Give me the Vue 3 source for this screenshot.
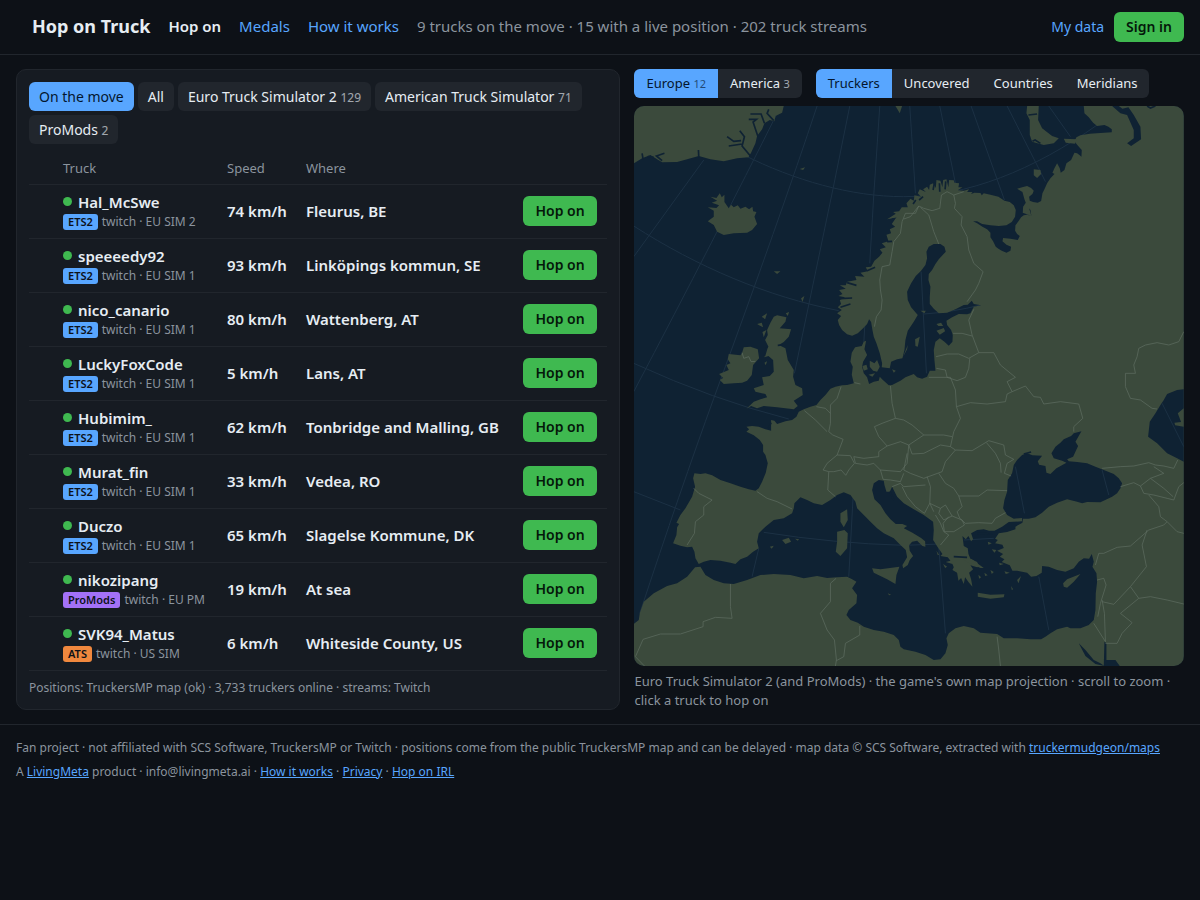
<script setup>
import { ref } from 'vue'

const filter = ref('move')
const region = ref('eu')
const layer = ref('Truckers')

const filters = [
  { id: 'move', label: 'On the move' },
  { id: 'all', label: 'All' },
  { id: 'ets2', label: 'Euro Truck Simulator 2', count: 129 },
  { id: 'ats', label: 'American Truck Simulator', count: 71 },
  { id: 'pm', label: 'ProMods', count: 2 }
]
const regions = [
  { id: 'eu', label: 'Europe', count: 12 },
  { id: 'us', label: 'America', count: 3 }
]
const layers = ['Truckers', 'Uncovered', 'Countries', 'Meridians']

const trucks = [
  { name: 'Hal_McSwe', game: 'ETS2', server: 'EU SIM 2', speed: 74, where: 'Fleurus, BE' },
  { name: 'speeeedy92', game: 'ETS2', server: 'EU SIM 1', speed: 93, where: 'Linköpings kommun, SE' },
  { name: 'nico_canario', game: 'ETS2', server: 'EU SIM 1', speed: 80, where: 'Wattenberg, AT' },
  { name: 'LuckyFoxCode', game: 'ETS2', server: 'EU SIM 1', speed: 5, where: 'Lans, AT' },
  { name: 'Hubimim_', game: 'ETS2', server: 'EU SIM 1', speed: 62, where: 'Tonbridge and Malling, GB' },
  { name: 'Murat_fin', game: 'ETS2', server: 'EU SIM 1', speed: 33, where: 'Vedea, RO' },
  { name: 'Duczo', game: 'ETS2', server: 'EU SIM 1', speed: 65, where: 'Slagelse Kommune, DK' },
  { name: 'nikozipang', game: 'ProMods', server: 'EU PM', speed: 19, where: 'At sea' },
  { name: 'SVK94_Matus', game: 'ATS', server: 'US SIM', speed: 6, where: 'Whiteside County, US' }
]
</script>

<template>
  <div class="page">
    <header class="top">
      <h1 class="brand">Hop on Truck</h1>
      <nav class="nav">
        <a href="#" class="current">Hop on</a>
        <a href="#medals">Medals</a>
        <a href="#how">How it works</a>
      </nav>
      <span class="stats">9 trucks on the move · 15 with a live position · 202 truck streams</span>
      <div class="account">
        <a href="#data">My data</a>
        <button type="button" class="go">Sign in</button>
      </div>
    </header>

    <main class="main">
      <section class="panel">
        <div class="chips">
          <button
            v-for="f in filters" :key="f.id" type="button" class="chip"
            :class="{ on: filter === f.id }" @click="filter = f.id"
          >{{ f.label + ' ' }}<small v-if="f.count">{{ f.count }}</small></button>
        </div>
        <table class="trucks">
          <colgroup>
            <col class="c-pin"><col class="c-truck"><col class="c-speed"><col><col class="c-act">
          </colgroup>
          <thead>
            <tr><th></th><th>Truck</th><th>Speed</th><th>Where</th><th></th></tr>
          </thead>
          <tbody>
            <tr v-for="t in trucks" :key="t.name">
              <td></td>
              <td>
                <div class="name"><span class="dot"></span>{{ t.name }}</div>
                <div class="sub"><span class="tag" :class="t.game.toLowerCase()">{{ t.game }}</span>twitch · {{ t.server }}</div>
              </td>
              <td class="strong">{{ t.speed }} km/h</td>
              <td class="strong">{{ t.where }}</td>
              <td class="act"><button type="button" class="go">Hop on</button></td>
            </tr>
          </tbody>
        </table>
        <p class="source">Positions: TruckersMP map (ok) · 3,733 truckers online · streams: Twitch</p>
      </section>

      <section class="side">
        <div class="switches">
          <div class="seg">
            <button
              v-for="r in regions" :key="r.id" type="button"
              :class="{ on: region === r.id }" @click="region = r.id"
            >{{ r.label }} <small>{{ r.count }}</small></button>
          </div>
          <div class="seg">
            <button
              v-for="l in layers" :key="l" type="button"
              :class="{ on: layer === l }" @click="layer = l"
            >{{ l }}</button>
          </div>
        </div>

        <svg class="map" viewBox="0 18 1650 1680" preserveAspectRatio="xMidYMid slice" role="img" aria-label="Map of Europe">
          <g class="grid">
            <path d="M330 165C480 240 650 290 810 290C1000 290 1200 210 1390 75M0 378C190 500 400 590 615 632M870 642Q960 636 1040 615M0 790Q240 900 465 957M0 1175L140 1230M390 1297Q600 1330 810 1336L920 1332M990 1320L1080 1315" />
            <path d="M210 180L0 470M430 40Q250 400 0 875M550 18Q440 350 240 895Q140 1170 18 1540M648 18L597 270L482 820M375 1345L355 1430M738 18L720 285L708 490M694 660L690 730M658 1190L645 1430M828 18L845 280M862 515L878 820M915 1340L935 1600M918 18L965 250M1215 1430L1245 1590M1145 1100L1172 1240M1012 18L1112 300M1120 18L1235 245M1245 18L1310 110M1405 1110L1425 1185" />
          </g>

          <g class="land">
            <path d="M1350 18L1352 40 1365 52 1378 68 1390 78 1412 75 1424 80 1434 88 1434 97 1400 99 1368 101 1340 106 1328 112 1322 124 1330 134 1344 150 1343 170 1338 166 1330 160 1322 158 1312 180 1298 190 1292 210 1281 218 1278 205 1270 190 1262 205 1256 218 1262 222 1250 235 1240 250 1232 268 1226 280 1224 292 1222 303 1212 308 1198 306 1188 302 1186 290 1196 282 1200 272 1192 264 1180 258 1165 262 1150 266 1166 276 1172 298 1176 308 1168 320 1167 338 1193 348 1186 325 1176 312 1190 330 1193 348 1180 344 1170 346 1162 352 1154 364 1145 376 1144 392 1150 402 1158 408 1152 420 1130 416 1108 414 1106 424 1118 434 1132 440 1130 452 1118 458 1104 452 1094 446 1086 440 1078 424 1070 412 1070 398 1060 388 1046 380 1030 370 1018 364 1030 364 1045 372 1070 376 1095 378 1118 376 1134 366 1144 350 1146 330 1140 316 1128 306 1112 302 1094 290 1070 284 1050 280 1044 286 1040 279 1022 278 1012 282 1016 276 1000 276 1006 268 990 272 972 271 986 262 974 262 976 250 962 248 960 241 946 240 944 262 938 238 928 240 926 262 920 242 908 240 906 264 898 250 888 254 886 270 880 260 868 268 876 276 858 268 852 280 862 290 842 286 840 302 830 296 818 310 822 322 804 322 796 334 778 336 790 344 764 356 788 352 774 372 784 380 768 388 772 400 758 404 764 424 744 430 756 442 738 448 746 458 736 470 722 482 712 500 696 502 702 514 680 518 692 530 664 528 668 540 640 545 636 556 618 556 636 566 616 570 626 582 614 588 634 592 618 600 622 612 612 622 624 630 610 640 622 648 612 660 616 675 625 690 640 703 655 707 672 700 688 685 700 672 706 658 712 666 716 690 720 710 728 730 738 760 745 790 744 802 768 805 772 785 790 778 806 775 812 750 815 720 822 692 840 665 852 645 832 622 822 600 820 575 832 550 846 528 862 512 875 495 880 475 878 455 885 440 900 432 920 432 932 440 936 455 926 466 915 478 905 492 895 510 885 522 884 540 890 560 888 590 888 612 900 626 915 640 940 638 965 628 990 615 1002 614 1014 602 1020 612 1042 616 1020 620 1010 640 1000 643 975 642 955 652 938 662 940 675 952 690 957 705 956 725 945 737 932 725 918 715 905 725 900 750 902 780 905 812 888 812 880 830 865 836 850 832 840 822 815 832 800 842 775 855 765 856 745 838 738 830 735 842 720 845 706 852 700 832 690 820 685 800 688 785 700 765 692 748 697 722 690 725 684 738 664 742 654 758 650 785 657 800 654 824 660 850 640 855 625 856 605 860 590 866 575 885 560 900 548 915 530 920 510 928 495 935 488 950 475 960 455 964 430 972 422 962 412 960 412 992 395 988 375 980 355 978 338 980 346 988 338 995 360 1006 378 1020 388 1035 388 1055 395 1065 402 1090 396 1118 385 1145 375 1165 365 1172 345 1168 320 1160 290 1150 260 1140 235 1126 215 1120 200 1122 182 1120 178 1135 184 1160 175 1190 155 1225 140 1245 128 1268 136 1272 130 1282 128 1305 118 1330 140 1337 160 1342 175 1340 182 1355 185 1375 195 1392 210 1385 230 1380 260 1382 290 1388 305 1392 320 1378 340 1370 358 1355 375 1345 370 1325 375 1300 395 1280 420 1260 450 1255 475 1240 480 1225 482 1210 500 1192 520 1200 540 1210 565 1215 590 1200 610 1185 630 1177 650 1185 665 1205 670 1225 690 1245 710 1265 730 1285 750 1300 780 1315 800 1335 816 1350 820 1372 806 1395 808 1405 822 1395 828 1380 838 1368 828 1352 826 1336 835 1325 850 1322 866 1338 875 1340 874 1324 862 1314 836 1298 810 1285 820 1278 806 1272 786 1272 770 1258 755 1240 740 1215 722 1198 715 1170 720 1150 735 1140 750 1142 752 1155 758 1175 768 1175 775 1160 790 1190 810 1210 840 1228 870 1245 898 1265 900 1290 898 1320 912 1342 926 1362 920 1368 942 1372 950 1382 936 1386 956 1392 960 1402 956 1410 970 1418 974 1442 982 1434 990 1452 994 1432 1004 1446 1016 1460 1012 1438 1006 1418 1018 1408 1010 1396 1030 1402 1036 1400 1030 1386 1010 1376 1004 1362 1002 1345 990 1338 986 1308 996 1318 1004 1308 1012 1324 1018 1318 1012 1300 1030 1290 1050 1288 1066 1292 1082 1292 1105 1280 1125 1266 1165 1264 1165 1254 1140 1256 1120 1245 1108 1225 1112 1200 1120 1175 1122 1140 1135 1120 1140 1095 1150 1080 1165 1065 1180 1060 1196 1066 1225 1067 1212 1084 1216 1094 1235 1098 1238 1118 1250 1122 1268 1105 1298 1088 1285 1082 1260 1075 1253 1060 1265 1040 1280 1028 1290 1018 1312 1008 1320 1000 1343 994 1325 1025 1333 1038 1318 1070 1300 1078 1305 1084 1330 1086 1360 1090 1385 1100 1410 1110 1440 1122 1455 1135 1465 1150 1460 1165 1450 1180 1435 1190 1400 1207 1360 1206 1345 1210 1330 1205 1300 1198 1270 1208 1245 1220 1225 1238 1205 1252 1185 1256 1168 1256 1166 1268 1145 1280 1145 1288 1120 1296 1095 1300 1084 1316 1092 1320 1084 1330 1106 1334 1110 1344 1090 1352 1108 1362 1098 1370 1112 1378 1104 1386 1128 1396 1136 1412 1150 1412 1180 1418 1192 1430 1208 1428 1224 1418 1225 1398 1245 1400 1270 1410 1295 1415 1320 1405 1335 1385 1350 1375 1366 1376 1374 1362 1380 1385 1376 1400 1388 1420 1390 1445 1386 1480 1385 1530 1380 1560 1365 1575 1340 1585 1310 1585 1300 1580 1270 1588 1250 1600 1235 1610 1222 1618 1190 1618 1150 1615 1110 1615 1090 1602 1040 1598 1020 1585 990 1578 965 1585 945 1600 938 1615 942 1635 935 1660 920 1678 900 1680 875 1665 845 1655 810 1648 800 1640 795 1620 780 1605 750 1595 720 1590 690 1580 672 1568 650 1560 638 1545 645 1530 668 1510 670 1485 655 1465 668 1445 655 1438 640 1430 610 1432 580 1434 550 1428 510 1435 470 1425 420 1422 380 1425 340 1440 300 1452 270 1450 240 1440 215 1425 200 1400 184 1402 160 1430 130 1450 100 1458 60 1480 30 1505 18 1540 15 1560 0 1572V1698H1650V18Z" />
            <path d="M0 18H450L445 38 425 48 422 64 408 60 392 70 385 88 370 108 365 130 352 158 344 172 310 175 270 184 230 178 195 168 160 178 130 186 85 187 70 178 50 165 25 175 0 190Z" />
            <path d="M230 290L248 294 258 280 264 292 272 284 272 306 285 325 292 314 300 322 312 316 320 326 335 320 346 328 356 320 358 334 368 336 362 350 370 372 355 390 340 398 300 400 270 405 250 395 240 375 222 364 240 350 240 332 222 322 248 324 256 316 234 308 250 302Z" />
            <path d="M420 650L430 646 458 652 455 665 438 685 472 688 465 710 450 726 435 735 455 745 462 780 480 810 478 830 485 855 505 865 507 885 480 902 492 918 480 928 430 922 390 918 370 925 352 918 338 926 360 905 380 898 400 892 395 882 365 875 360 865 390 855 385 832 408 828 420 815 418 780 404 768 392 772 396 750 404 740 394 720 402 705 400 690 410 668Z" />
            <path d="M330 742L350 740 372 748 376 775 358 795 354 825 340 842 325 848 300 850 270 852 258 840 268 834 256 822 285 810 278 795 290 790 282 778 285 762 320 766 325 758Z" />
            <path d="M384 650L400 640 394 658ZM370 672L384 668 388 682 376 676ZM386 696L398 690 390 712ZM456 640L466 636 462 648ZM502 595L512 588 506 606ZM392 788L400 784 396 796ZM498 207L514 202 508 210ZM420 514L440 514 430 522ZM785 18H805L798 40ZM760 358L798 334 788 352ZM1180 18H1215L1213 60 1225 85 1255 108 1275 115 1260 130 1230 135 1195 125 1188 105 1188 60 1178 40ZM1290 116L1328 118 1324 131 1296 128ZM1200 208L1220 210 1222 222 1210 234 1200 226Z" />
            <path d="M686 798L698 794 702 808 690 812ZM708 782L722 790 730 780 738 800 730 815 718 812 708 800ZM704 824L724 820 716 830ZM775 808L786 812 780 818ZM808 770L822 735 820 748ZM844 718L858 710 852 740 845 738ZM908 672L922 668 928 678 914 678ZM908 692L930 684 934 694 918 704ZM860 632L876 632 872 640Z" />
            <path d="M715 1405L740 1408 797 1400 788 1425 785 1452 760 1438 720 1418ZM610 1295L632 1290 642 1300 640 1345 620 1368 606 1355 610 1325ZM620 1240L640 1228 642 1260 630 1282 620 1265ZM445 1320L465 1313 472 1325 455 1332ZM408 1340L420 1337 414 1346ZM484 1316L496 1318 492 1322ZM762 1480L772 1484 766 1486ZM1032 1478L1070 1484 1112 1483 1110 1492 1070 1496 1032 1490ZM1288 1450L1300 1438 1340 1422 1320 1445 1300 1463 1290 1460ZM1150 1440L1162 1428 1154 1450ZM984 1375L1014 1378 1050 1404 1040 1404 1000 1386ZM1074 1348L1088 1350 1082 1358ZM1062 1325L1074 1330 1064 1334ZM1096 1388L1110 1392 1098 1396ZM1052 1418L1062 1426 1054 1428ZM1070 1410L1080 1416 1074 1422ZM1034 1424L1042 1432 1036 1436ZM1112 1414L1128 1418 1116 1422ZM1132 1458L1138 1468 1134 1470ZM908 1352L916 1364 912 1366ZM928 1392L940 1400 934 1404Z" />
          </g>

          <g class="sea">
            <path d="M1650 868L1630 870 1600 882 1590 900 1580 915 1565 940 1548 965 1543 1010 1570 1030 1600 1060 1630 1075 1650 1085V980L1624 976 1622 968 1642 966 1632 940 1650 925Z" />
            <path d="M1335 1630L1355 1650 1380 1680 1400 1690 1412 1698 1385 1692 1355 1668ZM1412 1625L1418 1630 1418 1680 1445 1680 1458 1698H1410ZM1435 18L1460 40 1480 45 1500 90 1500 115 1480 130 1492 138 1522 118 1520 80 1500 45 1484 22 1466 26 1455 18Z" />
          </g>
          <g class="inlet">
            <path d="M350 168L325 138 332 110 318 92M325 132L285 138M322 122L300 124 280 110M372 108L358 66 368 58 345 58M392 70L382 42 350 42M420 62L400 40 405 28M195 172L194 150M85 182L68 168 92 160M28 178L25 160M60 172L42 170" />
            <path d="M618 596L655 594M620 622L650 612M700 512L724 502M640 548L668 556M760 425L775 424M898 270L902 248M918 275L917 250M934 268L936 244M846 300L838 312M868 290L856 300" />
            <path d="M1000 1372L960 1370M1076 1302L1030 1300M1540 18L1550 24 1565 18M1184 45L1210 42M1196 124L1204 120 1220 130M445 735L432 736M412 968L404 985M768 1175L780 1200M1170 1062L1192 1056M400 740L392 768" />
          </g>
          <g class="grid">
            <path d="M1585 910L1650 1040" />
          </g>

          <g class="borders">
            <path d="M810 357L830 350 855 318 870 325 895 332 918 325 923 285 940 275 960 285 965 310 962 325 985 350 982 375 1000 410 1005 450 1020 490 1048 515 1035 550 1025 570 1000 605M855 318L845 340 815 340 805 365 800 400 780 425 775 455 768 495 745 500 738 540 740 570 745 600 742 630 728 650 722 680M860 322L885 345 900 395 915 432M960 285L990 275" />
            <path d="M1020 628L1005 660 1015 705 1035 758 1080 758 1100 795 1145 832 1120 845 1135 875 1175 858 1200 890 1220 892 1230 912 1280 905 1335 912 1347 955 1320 980 1320 995M958 700L985 700 1015 708M907 770L940 762 975 762 1005 775 1035 758M1008 775L1005 805 995 832 970 842 940 832 935 810 908 805M885 832L950 832 965 870 968 920 980 955 960 995 950 1040 965 1050 1015 1052 1065 1022 1110 1035 1115 1065 1140 1078 1120 1090 1112 1120 1132 1128M968 920L1010 908 1060 912 1115 905 1120 882 1135 875M1058 1028L1085 1060 1100 1090 1102 1118" />
            <path d="M950 1040L920 1035 870 1060 835 1062 825 1035 870 1005 930 1005 955 1010M965 1050L935 1085 925 1115 870 1135 830 1120 810 1110 820 1060M770 858L775 910 785 955 810 960 835 975 870 1005M785 955L745 970 722 980 735 1010 760 1038 800 1025 825 1035M760 1038L735 1055 735 1070 690 1075 660 1070 665 1090 700 1095 720 1090 740 1110 800 1115 820 1090 825 1035M622 860L610 895 590 915 590 970 585 995 597 1005 628 1018 610 1065 580 1090 568 1110 585 1115 582 1170 605 1190M548 920L575 925 590 940M512 932L545 960 580 995M610 1065L650 1067 662 1090 645 1110 636 1126 622 1110 600 1115 585 1115M325 758L330 775 345 770 352 785 365 784M662 848L680 852" />
            <path d="M370 1175L400 1195 430 1205 475 1227M180 1165L195 1180 235 1200 210 1220 210 1245 185 1265 182 1300 160 1335M290 1452L290 1520 295 1555 245 1552 208 1565 208 1580 140 1602 80 1602 28 1618 5 1670 32 1698M607 1435L590 1450 590 1505 560 1540 580 1590 602 1620 608 1680 605 1698M678 1578L678 1605 635 1630 630 1670 608 1682M1090 1610L1095 1650 1100 1698" />
            <path d="M1380 1570L1415 1625 1412 1540 1405 1500M1385 1395L1395 1360 1410 1360 1450 1342 1490 1338 1545 1290 1590 1275M1540 1290L1525 1335 1538 1400 1490 1460 1440 1513 1405 1505M1490 1460L1515 1495 1460 1540 1495 1568 1465 1600 1450 1630 1415 1630M1515 1495L1550 1490 1600 1500 1650 1512M1390 1440L1410 1435 1417 1455 1400 1510 1392 1550M1545 1185L1575 1220 1580 1250 1600 1265 1590 1275M1600 1265L1630 1295 1650 1300M1405 1105L1460 1100 1500 1098 1545 1088 1565 1095 1590 1098 1620 1105 1632 1080M1460 1160L1500 1148 1520 1158 1550 1135 1590 1120 1560 1100M1520 1158L1530 1180 1560 1185 1600 1195 1620 1200 1635 1160 1650 1148M1550 1135L1590 1165 1618 1190M1650 695L1635 725 1605 735 1570 728 1535 735 1515 745 1510 770 1500 795 1505 820 1475 820 1475 860 1490 895 1520 900 1555 925 1570 927" />
            <path d="M1120 1172L1060 1170 1035 1188 975 1188 985 1220 970 1235 978 1255 995 1270 1035 1268 1075 1270 1085 1255 1115 1238M975 1188L960 1165 935 1150 915 1120M880 1130L890 1160 888 1210 872 1240M888 1210L920 1225 935 1215 955 1248 930 1260 915 1240 920 1225M955 1248L985 1260 992 1275 960 1295 932 1295 928 1270 945 1250M905 1245L920 1270 930 1295 945 1305 920 1335M740 1110L748 1138 770 1140 800 1145 810 1120M775 1160L800 1150 810 1160 875 1155M805 1160L820 1190 845 1220 872 1240M888 1210L900 1235" />
          </g>
        </svg>

        <p class="caption">Euro Truck Simulator 2 (and ProMods) · the game's own map projection · scroll to zoom · click a truck to hop on</p>
      </section>
    </main>

    <footer class="foot">
      <p>Fan project · not affiliated with SCS Software, TruckersMP or Twitch · positions come from the public TruckersMP map and can be delayed · map data © SCS Software, extracted with <a href="#maps">truckermudgeon/maps</a></p>
      <p>A <a href="#livingmeta">LivingMeta</a> product · info@livingmeta.ai · <a href="#how">How it works</a> · <a href="#privacy">Privacy</a> · <a href="#irl">Hop on IRL</a></p>
    </footer>
  </div>
</template>

<style>
body {
  margin: 0;
  background: #0d1117;
}
</style>

<style scoped>
.page {
  color: #e6edf3;
  font: 15px/22px "Noto Sans", sans-serif;
}
a {
  color: #58a6ff;
  text-decoration: none;
}
button {
  border: 0;
  font: inherit;
  color: inherit;
  cursor: pointer;
}
.top {
  display: flex;
  align-items: center;
  gap: 18px;
  padding: 12px 16px;
  border-bottom: 1px solid #21262d;
}
.brand,
.nav,
.stats {
  padding-bottom: 2px;
}
.brand {
  margin: 0 0 0 16px;
  font-size: 18px;
  line-height: 24px;
  font-weight: 700;
}
.nav {
  display: flex;
  gap: 18px;
}
.nav .current {
  color: #e6edf3;
  font-weight: 600;
}
.stats {
  color: #8b949e;
}
.account {
  display: flex;
  align-items: center;
  gap: 10px;
  margin-left: auto;
}
.account a {
  font-size: 14px;
}
.go {
  padding: 4px 12px;
  border-radius: 6px;
  background: #3fb950;
  color: #04180a;
  font-size: 14px;
  font-weight: 600;
}
.main {
  display: grid;
  grid-template-columns: 11fr 10fr;
  gap: 14px;
  padding: 14px 16px;
}
.panel {
  padding: 12px;
  border: 1px solid #21262d;
  border-radius: 10px;
  background: #161b22;
}
.chips {
  display: flex;
  flex-wrap: wrap;
  gap: 4px;
  margin-bottom: 8px;
}
.chip {
  padding: 4px 10px;
  border-radius: 6px;
  background: #21262d;
  font-size: 14px;
  line-height: 21px;
  white-space: break-spaces;
}
small {
  font-size: 11px;
  line-height: 1;
  opacity: .65;
}
.chip {
  white-space: normal;
}
.chip small {
  font-size: 12px;
}
.on,
.seg .on {
  background: #58a6ff;
  color: #04162e;
}
.trucks {
  width: 100%;
  table-layout: fixed;
  border-collapse: collapse;
}
.c-pin { width: 24px; }
.c-truck { width: 164px; }
.c-speed { width: 79px; }
.c-act { width: 94px; }
th {
  height: 32px;
  padding: 0 10px;
  border-bottom: 1px solid #21262d;
  color: #8b949e;
  font-size: 13px;
  line-height: 20px;
  font-weight: 400;
  text-align: left;
}
td {
  height: 53px;
  padding: 0 10px;
  border-bottom: 1px solid #21262d;
  white-space: nowrap;
}
.strong,
.act {
  height: 51px;
  padding-bottom: 2px;
}
.strong,
.name {
  font-weight: 600;
}
.name {
  display: flex;
  align-items: center;
  gap: 6px;
  line-height: 20px;
}
.dot {
  width: 9px;
  height: 9px;
  border-radius: 50%;
  background: #3fb950;
}
.sub {
  display: flex;
  align-items: center;
  gap: 4px;
  color: #8b949e;
  font-size: 12px;
  line-height: 20px;
}
.tag {
  padding: 0 5px;
  border-radius: 3px;
  background: #58a6ff;
  color: #0d1117;
  font-size: 11px;
  line-height: 16px;
  font-weight: 600;
}
.tag.promods { background: #a371f7; }
.tag.ats { background: #f0883e; }
.source {
  margin: 8px 0 0;
  color: #8b949e;
  font-size: 12px;
  line-height: 18px;
}
.switches {
  display: flex;
  gap: 14px;
  margin-bottom: 8px;
}
.seg {
  display: flex;
  overflow: hidden;
  border-radius: 6px;
  background: #21262d;
}
.seg button {
  padding: 4px 12px;
  background: none;
  font-size: 13px;
  line-height: 21px;
}
.seg .on {
  background: #58a6ff;
}
.map {
  display: block;
  width: 100%;
  height: 560px;
  border-radius: 10px;
  background: #0f2233;
}
.land path { fill: #3b4a3c; }
.sea path { fill: #0f2233; }
.inlet path {
  fill: none;
  stroke: #0f2233;
  stroke-width: 5;
}
.grid path {
  fill: none;
  stroke: #1c3144;
  stroke-width: 3;
}
.borders path {
  fill: none;
  stroke: #616f63;
  stroke-width: 2;
  stroke-linejoin: round;
}
.caption {
  margin: 6px 0 0;
  color: #8b949e;
  font-size: 13px;
  line-height: 19px;
}
.foot {
  padding: 11px 16px;
  border-top: 1px solid #21262d;
  color: #8b949e;
  font-size: 12px;
  line-height: 24px;
}
.foot p { margin: 0; }
.foot a { text-decoration: underline; }
</style>
